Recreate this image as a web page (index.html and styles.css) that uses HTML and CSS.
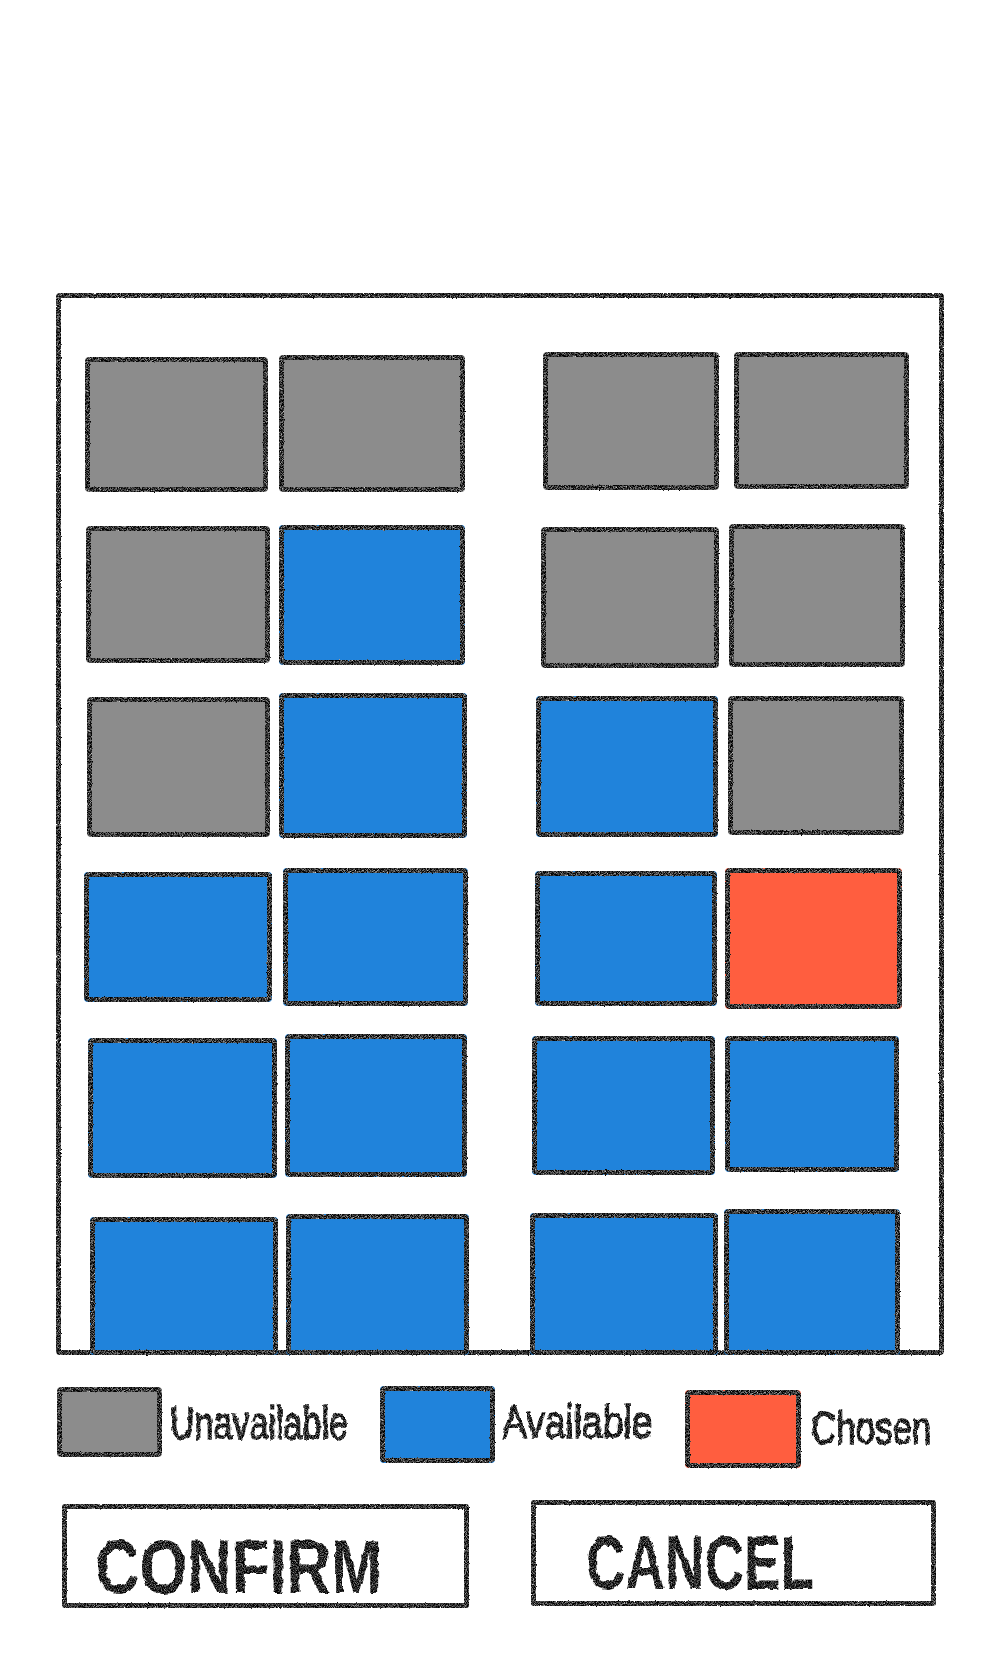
FILE: index.html
```html
<!DOCTYPE html>
<html lang="en">
<head>
<meta charset="utf-8">
<title>Seat selection</title>
<link rel="stylesheet" href="styles.css">
</head>
<body>
<svg class="defs" width="0" height="0" aria-hidden="true">
  <filter id="grain" x="-5%" y="-5%" width="110%" height="110%" color-interpolation-filters="sRGB">
    <feTurbulence type="fractalNoise" baseFrequency="0.45" numOctaves="2" seed="4" result="warp"/>
    <feDisplacementMap in="SourceGraphic" in2="warp" scale="2" xChannelSelector="R" yChannelSelector="G" result="rough"/>
    <feGaussianBlur in="rough" stdDeviation="0.55" result="soft"/>
    <feTurbulence type="fractalNoise" baseFrequency="1.1" numOctaves="2" seed="9"/>
    <feColorMatrix type="matrix" values="1.6 0 0 0 -0.6  1.6 0 0 0 -0.6  1.6 0 0 0 -0.6  0 0 0 0 1" result="speck"/>
    <feComposite in="speck" in2="soft" operator="in"/>
  </filter>
  <filter id="inkline" x="-5%" y="-10%" width="110%" height="120%" color-interpolation-filters="sRGB">
    <feTurbulence type="fractalNoise" baseFrequency="0.12" numOctaves="2" seed="2" result="warp"/>
    <feDisplacementMap in="SourceGraphic" in2="warp" scale="5" xChannelSelector="R" yChannelSelector="G" result="rough"/>
    <feGaussianBlur in="rough" stdDeviation="0.7" result="soft"/>
    <feTurbulence type="fractalNoise" baseFrequency="0.9" numOctaves="2" seed="7"/>
    <feColorMatrix type="matrix" values="1.5 0 0 0 -0.6  1.5 0 0 0 -0.6  1.5 0 0 0 -0.6  0 0 0 0 1" result="speck"/>
    <feComposite in="speck" in2="soft" operator="in"/>
  </filter>
</svg>

<main class="page">
  <section class="cabin">
    <div class="seat off s11"></div><div class="seat off s12"></div><div class="seat off s13"></div><div class="seat off s14"></div>
    <div class="seat off s21"></div><div class="seat open s22"></div><div class="seat off s23"></div><div class="seat off s24"></div>
    <div class="seat off s31"></div><div class="seat open s32"></div><div class="seat open s33"></div><div class="seat off s34"></div>
    <div class="seat open s41"></div><div class="seat open s42"></div><div class="seat open s43"></div><div class="seat chosen s44"></div>
    <div class="seat open s51"></div><div class="seat open s52"></div><div class="seat open s53"></div><div class="seat open s54"></div>
    <div class="seat open s61"></div><div class="seat open s62"></div><div class="seat open s63"></div><div class="seat open s64"></div>
  </section>

  <section class="legend">
    <div class="seat off key-off"></div><span class="label label-off">Unavailable</span>
    <div class="seat open key-open"></div><span class="label label-open">Available</span>
    <div class="seat chosen key-chosen"></div><span class="label label-chosen">Chosen</span>
  </section>

  <section class="actions">
    <button class="action action-confirm"><span class="action-text">CONFIRM</span></button>
    <button class="action action-cancel"><span class="action-text">CANCEL</span></button>
  </section>
</main>
</body>
</html>
```
FILE: styles.css
```css
* { box-sizing: border-box; }
html, body { margin: 0; background: #fff; }
.defs { display: block; height: 0; }
.page { width: 1000px; height: 1666px; padding: 293px 0 0 56px; overflow: hidden; }

.cabin {
  position: relative;
  width: 888px;
  height: 1062px;
  padding: 59px 0 0 28px;
  display: grid;
  grid-template-columns: 195px 251px 194px 180px;
  grid-template-rows: 172px 169px 175px 166px 175px 141px;
}
.cabin::before {
  content: "";
  position: absolute;
  inset: 0;
  border: 5px solid #333;
  border-radius: 4px;
  filter: url(#grain);
}

.seat { position: relative; border-radius: 4px; }
.seat::after {
  content: "";
  position: absolute;
  inset: 0;
  border: 5px solid #333;
  border-radius: 5px;
  filter: url(#grain);
}
.off { background: #8c8c8c; }
.open { background: #2083db; }
.chosen { background: #ff5e3f; }

.s11 { margin: 5px 0 0 1px; width: 183px; height: 135px; }
.s12 { margin: 3px 0 0 0; width: 186px; height: 137px; }
.s13 { margin: 0 0 0 13px; width: 176px; height: 138px; }
.s14 { margin: 0 0 0 10px; width: 175px; height: 137px; }
.s21 { margin: 2px 0 0 2px; width: 184px; height: 137px; }
.s22 { margin: 1px 0 0 0; width: 186px; height: 140px; }
.s23 { margin: 3px 0 0 11px; width: 178px; height: 141px; }
.s24 { margin: 0 0 0 5px; width: 176px; height: 143px; }
.s31 { margin: 4px 0 0 3px; width: 183px; height: 140px; }
.s32 { margin: 0 0 0 0; width: 188px; height: 145px; }
.s33 { margin: 3px 0 0 6px; width: 182px; height: 141px; }
.s34 { margin: 3px 0 0 4px; width: 176px; height: 139px; }
.s41 { margin: 4px 0 0 0; width: 188px; height: 130px; }
.s42 { margin: 0 0 0 4px; width: 185px; height: 138px; }
.s43 { margin: 3px 0 0 5px; width: 182px; height: 135px; }
.s44 { margin: 0 0 0 1px; width: 177px; height: 141px; }
.s51 { margin: 4px 0 0 4px; width: 189px; height: 140px; }
.s52 { margin: 0 0 0 6px; width: 182px; height: 143px; }
.s53 { margin: 2px 0 0 2px; width: 183px; height: 139px; }
.s54 { margin: 2px 0 0 1px; width: 174px; height: 136px; }
.s61 { margin: 8px 0 0 6px; width: 188px; height: 138px; }
.s62 { margin: 5px 0 0 7px; width: 183px; height: 141px; }
.s63 { margin: 4px 0 0 0; width: 188px; height: 142px; }
.s64 { margin: 0; width: 176px; height: 146px; }

.legend {
  display: flex;
  align-items: flex-start;
  height: 114px;
  margin: 31px 0 0 1px;
}
.key-off { width: 105px; height: 70px; margin-top: 1px; }
.key-open { width: 115px; height: 77px; }
.key-chosen { width: 116px; height: 78px; margin-top: 4px; }

.label {
  font-family: "Liberation Sans", sans-serif;
  font-size: 46px;
  line-height: 46px;
  -webkit-text-stroke: 1.4px #2e2e2e;
  color: #2e2e2e;
  white-space: nowrap;
  transform: scaleX(0.74);
  transform-origin: left center;
  filter: url(#inkline);
}
.label-off { width: 210px; margin: 14px 0 0 8px; }
.label-open { width: 183px; margin: 13px 0 0 7px; transform: scaleX(0.81); }
.label-chosen { margin: 19px 0 0 10px; transform: scaleX(0.76); }

.actions { display: flex; align-items: flex-start; margin-left: 1px; }
.action {
  position: relative;
  display: block;
  border: 0;
  background: #fff;
  text-align: left;
}
.action::after {
  content: "";
  position: absolute;
  inset: 0;
  border: 5px solid #333;
  border-radius: 3px;
  filter: url(#grain);
}
.action-confirm { width: 407px; height: 104px; margin: 4px 0 0 5px; padding: 22px 0 0 33px; }
.action-cancel { width: 405px; height: 106px; margin: 0 0 0 62px; padding: 20px 0 0 55px; }
.action-text {
  display: block;
  width: 340px;
  font-family: "Liberation Sans", sans-serif;
  font-weight: 700;
  font-size: 76px;
  line-height: 76px;
  color: #262626;
  transform-origin: left center;
  filter: url(#inkline);
}
.action-confirm .action-text { transform: scaleX(0.81); }
.action-cancel .action-text { transform: scaleX(0.72); }
```
